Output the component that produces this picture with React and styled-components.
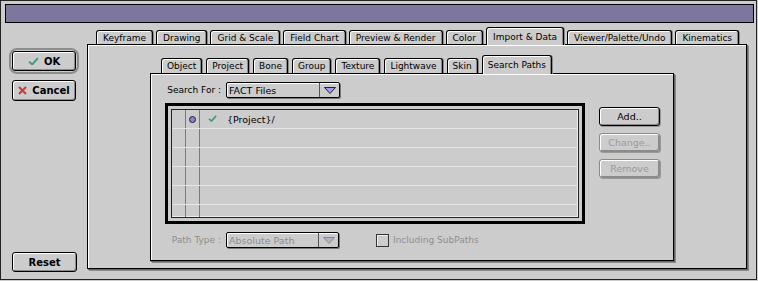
import React from 'react';
import styled, { createGlobalStyle } from 'styled-components';

const GlobalStyle = createGlobalStyle`
  html, body {
    margin: 0;
    padding: 0;
    background: #cccccc;
  }
  * {
    box-sizing: border-box;
  }
`;

const Window = styled.div`
  width: 757px;
  height: 280px;
  display: flex;
  flex-direction: column;
  background: #cccccc;
  border: 1px solid #222;
  padding: 3px 2px 0 4px;
  font-family: 'DejaVu Sans', 'Liberation Sans', sans-serif;
  font-size: 9px;
  color: #000;
`;

const TitleBar = styled.div`
  height: 19px;
  border: 1px solid #000;
  background: #7d769f;
`;

const Body = styled.div`
  flex: 1;
  display: flex;
`;

const SideColumn = styled.div`
  width: 82px;
  display: flex;
  flex-direction: column;
  padding: 28px 0 7px 7px;
`;

const DefaultRing = styled.div`
  width: 64px;
  border-radius: 5px;
  box-shadow: 0 0 0 1px #cccccc, 0 0 0 3px #8d8d8d;
`;

const BigButton = styled.button`
  width: ${({ $w }) => $w || 64}px;
  height: ${({ $h }) => $h || 20}px;
  margin-top: ${({ $mt }) => $mt || 0}px;
  display: flex;
  align-items: center;
  justify-content: center;
  gap: 5px;
  padding: 0;
  border: 1px solid #000;
  border-radius: 3px;
  background: #cccccc;
  box-shadow: inset 1px 1px 0 #fff, inset -1px -1px 0 #8a8a8a;
  font-family: 'DejaVu Sans', sans-serif;
  font-weight: bold;
  font-size: 10px;
  color: #000;
`;

const Spacer = styled.div`
  flex: 1;
`;

const Main = styled.div`
  display: flex;
  flex-direction: column;
  padding-top: 4px;
`;

const TabStrip = styled.div`
  height: ${({ $h }) => $h}px;
  display: flex;
  align-items: flex-end;
  gap: ${({ $gap }) => $gap}px;
  padding-left: ${({ $pl }) => $pl}px;
`;

const Tab = styled.div`
  position: relative;
  z-index: ${({ $active }) => ($active ? 2 : 0)};
  height: ${({ $active, $h }) => ($active ? $h + 1 : $h - 3)}px;
  margin-bottom: ${({ $active }) => ($active ? -1 : 0)}px;
  padding: 0 ${({ $pad }) => $pad}px;
  display: flex;
  align-items: center;
  border: 1px solid #000;
  border-bottom: none;
  border-radius: 3px 3px 0 0;
  background: #cccccc;
  box-shadow: inset 1px 1px 0 #fff, inset -1px 0 0 #8a8a8a, 1px 0 0 #8a8a8a;
  white-space: nowrap;
`;

const Panel = styled.div`
  width: ${({ $w }) => $w}px;
  height: ${({ $h }) => $h}px;
  border: 1px solid #000;
  background: #cccccc;
  box-shadow: inset 1px 1px 0 #fff, 1px 1px 0 #666, 2px 2px 0 #8a8a8a;
  padding: ${({ $pad }) => $pad};
`;

const FieldRow = styled.div`
  display: flex;
  align-items: center;
  height: 16px;
  margin-top: ${({ $mt }) => $mt || 0}px;
  color: ${({ $disabled }) => ($disabled ? '#8e8e8e' : '#000')};
`;

const Label = styled.div`
  width: 61px;
  padding-right: 5px;
  text-align: right;
`;

const Popup = styled.div`
  width: ${({ $w }) => $w}px;
  height: 16px;
  display: flex;
  border: 1px solid #000;
  border-radius: 2px;
  background: #cccccc;
  box-shadow: inset 1px 1px 0 #fff, 1px 1px 0 #777;
  color: inherit;
`;

const PopupText = styled.div`
  flex: 1;
  display: flex;
  align-items: center;
  padding-left: 2px;
  font-size: 9.5px;
`;

const PopupArrow = styled.div`
  width: 20px;
  display: flex;
  align-items: center;
  justify-content: center;
  border-left: 1px solid #555;
`;

const ListRow = styled.div`
  display: flex;
  margin-top: 5px;
`;

const ListFrame = styled.div`
  width: 420px;
  height: 121px;
  border: 3px solid #000;
  padding: 3px;
`;

const ListInner = styled.div`
  height: 100%;
  border: 1px solid #222;
  overflow: hidden;
  box-shadow: inset -1px -1px 0 #eee;
`;

const Row = styled.div`
  display: flex;
  height: 19px;
  border-bottom: 1px solid #e6e6e6;
`;

const Gutter = styled.div`
  width: 14px;
  flex-shrink: 0;
  display: flex;
  align-items: center;
  justify-content: center;
  border-right: 1px solid #7a7a7a;
`;

const Dot = styled.div`
  width: 7px;
  height: 7px;
  border-radius: 50%;
  border: 1px solid #222;
  background: #8484dc;
`;

const CheckCell = styled.div`
  width: 27px;
  display: flex;
  align-items: center;
  padding-left: 8px;
`;

const PathText = styled.div`
  display: flex;
  align-items: center;
  font-size: 9.5px;
`;

const ButtonColumn = styled.div`
  display: flex;
  flex-direction: column;
  gap: 7px;
  padding: 4px 0 0 14px;
`;

const SmallButton = styled.button`
  width: 61px;
  height: 19px;
  padding: 0;
  border: 1px solid ${({ disabled }) => (disabled ? '#8a8a8a' : '#000')};
  border-radius: 3px;
  background: #cccccc;
  box-shadow: inset 1px 1px 0 #fff, inset -1px -1px 0 #8a8a8a, 1px 1px 0 #999;
  font-family: 'DejaVu Sans', sans-serif;
  font-size: 9.5px;
  color: ${({ disabled }) => (disabled ? '#9a9a9a' : '#000')};
`;

const Checkbox = styled.div`
  width: 13px;
  height: 13px;
  margin-left: 37px;
  margin-right: 4px;
  border: 1px solid #333;
  background: #cccccc;
  box-shadow: inset 1px 1px 0 #eee;
`;

const Check = ({ size = 10 }) => (
  <svg width={size} height={size * 0.8} viewBox="0 0 10 8">
    <path d="M1 4.2 L3.8 6.8 L9 1" fill="none" stroke="#3f9c78" strokeWidth="1.8" />
  </svg>
);

const Cross = () => (
  <svg width="9" height="9" viewBox="0 0 9 9">
    <path d="M1 1 L8 8 M8 1 L1 8" stroke="#d8323a" strokeWidth="2" />
  </svg>
);

const Arrow = ({ muted }) => (
  <svg width="12" height="7" viewBox="0 0 12 7">
    <polygon points="0.5,0.5 11.5,0.5 6,6.5" fill={muted ? '#b4b4c8' : '#9c9cf2'} stroke={muted ? '#888' : '#222'} />
  </svg>
);

const outerTabs = [
  'Keyframe',
  'Drawing',
  'Grid & Scale',
  'Field Chart',
  'Preview & Render',
  'Color',
  'Import & Data',
  'Viewer/Palette/Undo',
  'Kinematics',
];

const innerTabs = ['Object', 'Project', 'Bone', 'Group', 'Texture', 'Lightwave', 'Skin', 'Search Paths'];

const App = () => (
  <>
    <GlobalStyle />
    <Window>
      <TitleBar />
      <Body>
        <SideColumn>
          <DefaultRing>
            <BigButton>
              <Check size={11} />
              OK
            </BigButton>
          </DefaultRing>
          <BigButton $h={21} $mt={9}>
            <Cross />
            Cancel
          </BigButton>
          <Spacer />
          <BigButton $w={65}>Reset</BigButton>
        </SideColumn>
        <Main>
          <TabStrip $h={17} $pl={9} $gap={3}>
            {outerTabs.map((t) => (
              <Tab key={t} $h={17} $pad={6} $active={t === 'Import & Data'}>
                {t}
              </Tab>
            ))}
          </TabStrip>
          <Panel $w={660} $h={225} $pad="10px 0 0 62px">
            <TabStrip $h={18} $pl={11} $gap={4}>
              {innerTabs.map((t) => (
                <Tab key={t} $h={18} $pad={5} $active={t === 'Search Paths'}>
                  {t}
                </Tab>
              ))}
            </TabStrip>
            <Panel $w={524} $h={188} $pad="8px 0 0 14px">
              <FieldRow>
                <Label>Search For :</Label>
                <Popup $w={114}>
                  <PopupText>FACT Files</PopupText>
                  <PopupArrow>
                    <Arrow />
                  </PopupArrow>
                </Popup>
              </FieldRow>
              <ListRow>
                <ListFrame>
                  <ListInner>
                    {[0, 1, 2, 3, 4, 5].map((i) => (
                      <Row key={i}>
                        <Gutter />
                        <Gutter>{i === 0 && <Dot />}</Gutter>
                        {i === 0 && (
                          <>
                            <CheckCell>
                              <Check size={9} />
                            </CheckCell>
                            <PathText>{'{Project}/'}</PathText>
                          </>
                        )}
                      </Row>
                    ))}
                  </ListInner>
                </ListFrame>
                <ButtonColumn>
                  <SmallButton>Add..</SmallButton>
                  <SmallButton disabled>Change..</SmallButton>
                  <SmallButton disabled>Remove</SmallButton>
                </ButtonColumn>
              </ListRow>
              <FieldRow $mt={8} $disabled>
                <Label>Path Type :</Label>
                <Popup $w={113}>
                  <PopupText>Absolute Path</PopupText>
                  <PopupArrow>
                    <Arrow muted />
                  </PopupArrow>
                </Popup>
                <Checkbox />
                Including SubPaths
              </FieldRow>
            </Panel>
          </Panel>
        </Main>
      </Body>
    </Window>
  </>
);

export default App;
